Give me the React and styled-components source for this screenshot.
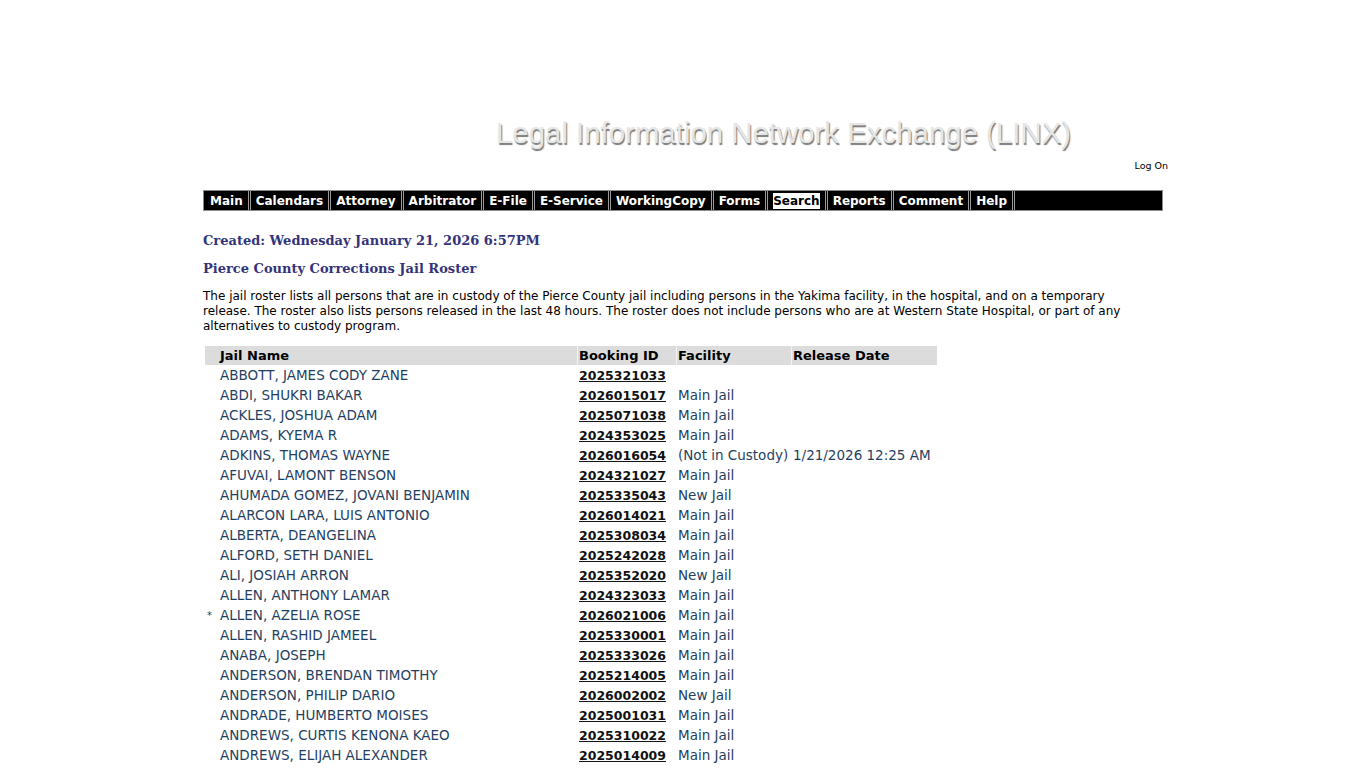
import styled, { createGlobalStyle } from 'styled-components'

const GlobalStyle = createGlobalStyle`
  html, body {
    margin: 0;
    padding: 0;
    background: #ffffff;
  }
  body {
    font-family: "DejaVu Sans", Verdana, sans-serif;
    color: #000;
  }
`

const Page = styled.div`
  width: 960px;
  margin: 0 auto;
  padding-top: 116px;
`

const Banner = styled.div`
  height: 40px;
  padding-left: 293px;
`

const BannerTitle = styled.h1`
  margin: 0;
  font-family: "Liberation Sans", Arial, sans-serif;
  font-weight: normal;
  font-size: 29.4px;
  line-height: 34px;
  color: #e6e6e6;
  text-shadow: 1px 2px 1px #7a7a7a;
  white-space: nowrap;
`

const LogOnRow = styled.div`
  display: flex;
  justify-content: flex-end;
  margin-right: -5px;
  height: 20px;
  padding-top: 4px;
  box-sizing: border-box;
`

const LogOn = styled.a`
  font-family: "DejaVu Sans", Verdana, sans-serif;
  font-size: 9.5px;
  color: #000;
  text-decoration: none;
`

const NavBar = styled.nav`
  display: flex;
  height: 21px;
  margin-top: 14px;
  background: #000;
  border: 1px solid #8a8a8a;
  box-sizing: border-box;
  padding-left: 1px;
`

const NavItem = styled.a`
  display: flex;
  align-items: center;
  padding: 0 5px;
  height: 100%;
  font-size: 12px;
  font-weight: bold;
  color: #fff;
  text-decoration: none;
  white-space: nowrap;
  border-right: 3px double #9a9a9a;
  box-sizing: border-box;
`

const NavLabel = styled.span`
  padding: 1px 0;
  color: ${p => (p.$active ? '#000' : '#fff')};
  background: ${p => (p.$active ? '#fff' : 'transparent')};
`

const Content = styled.div`
  padding-top: 21px;
`

const Heading = styled.h2`
  margin: 0 0 ${p => p.$gap || 0}px 0;
  font-family: "DejaVu Serif", Georgia, serif;
  font-size: 13px;
  font-weight: bold;
  line-height: 18px;
  color: #33337a;
`

const Intro = styled.p`
  margin: 11px 0 12px 0;
  font-size: 12px;
  line-height: 15px;
  width: 940px;
`

const Roster = styled.table`
  border-collapse: separate;
  border-spacing: 0;
  margin-left: 2px;
  font-size: 13.5px;
`

const HeadCell = styled.th`
  background: #dcdcdc;
  text-align: left;
  font-size: 13px;
  font-weight: bold;
  height: 19px;
  padding: 0 3px 0 1px;
  width: ${p => p.$w}px;
  box-sizing: border-box;
  border-right: ${p => (p.$gap ? '1px solid #f2f2f2' : 'none')};
  white-space: nowrap;
`

const Cell = styled.td`
  height: 20px;
  padding: 0 3px 0 1px;
  color: #1f3f62;
  white-space: nowrap;
  vertical-align: middle;
`

const MarkCell = styled.td`
  height: 20px;
  padding: 0 0 0 2px;
  font-size: 10px;
  color: #1f3f62;
  vertical-align: middle;
`

const BookingLink = styled.a`
  font-size: 12.5px;
  font-weight: bold;
  color: #111;
  text-decoration: underline;
`

const navItems = [
  'Main', 'Calendars', 'Attorney', 'Arbitrator', 'E-File', 'E-Service',
  'WorkingCopy', 'Forms', 'Search', 'Reports', 'Comment', 'Help',
]

const rows = [
  ['', 'ABBOTT, JAMES CODY ZANE', '2025321033', '', ''],
  ['', 'ABDI, SHUKRI BAKAR', '2026015017', 'Main Jail', ''],
  ['', 'ACKLES, JOSHUA ADAM', '2025071038', 'Main Jail', ''],
  ['', 'ADAMS, KYEMA R', '2024353025', 'Main Jail', ''],
  ['', 'ADKINS, THOMAS WAYNE', '2026016054', '(Not in Custody)', '1/21/2026 12:25 AM'],
  ['', 'AFUVAI, LAMONT BENSON', '2024321027', 'Main Jail', ''],
  ['', 'AHUMADA GOMEZ, JOVANI BENJAMIN', '2025335043', 'New Jail', ''],
  ['', 'ALARCON LARA, LUIS ANTONIO', '2026014021', 'Main Jail', ''],
  ['', 'ALBERTA, DEANGELINA', '2025308034', 'Main Jail', ''],
  ['', 'ALFORD, SETH DANIEL', '2025242028', 'Main Jail', ''],
  ['', 'ALI, JOSIAH ARRON', '2025352020', 'New Jail', ''],
  ['', 'ALLEN, ANTHONY LAMAR', '2024323033', 'Main Jail', ''],
  ['*', 'ALLEN, AZELIA ROSE', '2026021006', 'Main Jail', ''],
  ['', 'ALLEN, RASHID JAMEEL', '2025330001', 'Main Jail', ''],
  ['', 'ANABA, JOSEPH', '2025333026', 'Main Jail', ''],
  ['', 'ANDERSON, BRENDAN TIMOTHY', '2025214005', 'Main Jail', ''],
  ['', 'ANDERSON, PHILIP DARIO', '2026002002', 'New Jail', ''],
  ['', 'ANDRADE, HUMBERTO MOISES', '2025001031', 'Main Jail', ''],
  ['', 'ANDREWS, CURTIS KENONA KAEO', '2025310022', 'Main Jail', ''],
  ['', 'ANDREWS, ELIJAH ALEXANDER', '2025014009', 'Main Jail', ''],
]

export default function App() {
  return (
    <>
      <GlobalStyle />
      <Page>
        <Banner>
          <BannerTitle>Legal Information Network Exchange (LINX)</BannerTitle>
        </Banner>
        <LogOnRow>
          <LogOn href="#">Log On</LogOn>
        </LogOnRow>
        <NavBar>
          {navItems.map(item => (
            <NavItem key={item} href="#">
              <NavLabel $active={item === 'Search'}>{item}</NavLabel>
            </NavItem>
          ))}
        </NavBar>
        <Content>
          <Heading $gap={10}>Created: Wednesday January 21, 2026 6:57PM</Heading>
          <Heading>Pierce County Corrections Jail Roster</Heading>
          <Intro>
            The jail roster lists all persons that are in custody of the Pierce County jail including persons in the Yakima facility, in the hospital, and on a temporary release. The roster also lists persons released in the last 48 hours. The roster does not include persons who are at Western State Hospital, or part of any alternatives to custody program.
          </Intro>
          <Roster>
            <thead>
              <tr>
                <HeadCell $w={14} style={{ padding: 0 }}></HeadCell>
                <HeadCell $w={359} $gap>Jail Name</HeadCell>
                <HeadCell $w={99} $gap>Booking ID</HeadCell>
                <HeadCell $w={115} $gap>Facility</HeadCell>
                <HeadCell $w={145}>Release Date</HeadCell>
              </tr>
            </thead>
            <tbody>
              {rows.map(([mark, name, id, facility, release]) => (
                <tr key={id}>
                  <MarkCell>{mark}</MarkCell>
                  <Cell>{name}</Cell>
                  <Cell>
                    <BookingLink href="#">{id}</BookingLink>
                  </Cell>
                  <Cell>{facility}</Cell>
                  <Cell>{release}</Cell>
                </tr>
              ))}
            </tbody>
          </Roster>
        </Content>
      </Page>
    </>
  )
}
